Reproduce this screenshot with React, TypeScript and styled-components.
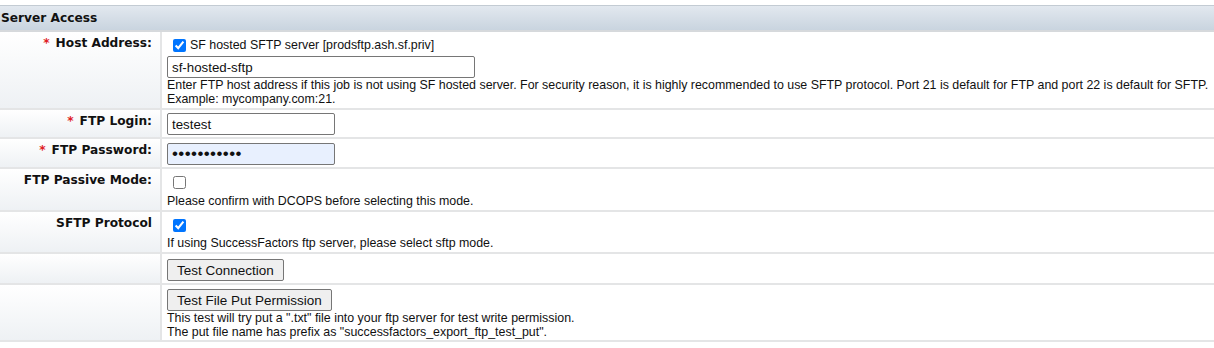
import React from "react";
import styled, { createGlobalStyle } from "styled-components";

const Global = createGlobalStyle`
  html, body { margin: 0; padding: 0; background: #fff; }
  body { font-family: "Liberation Sans", Arial, sans-serif; color: #111; }
`;

const Page = styled.div`
  padding-top: 5px;
  width: 1214px;
`;

const SectionHeader = styled.div`
  height: 24px;
  border-top: 1px solid #c3cbd3;
  border-bottom: 2px solid #d6d9dc;
  background: linear-gradient(#e2e8ef, #c9d4df);
  display: flex;
  align-items: center;
  padding-left: 1px;
  font-family: "DejaVu Sans", Verdana, sans-serif;
  font-weight: bold;
  font-size: 12.2px;
  color: #111;
`;

const Row = styled.div`
  display: grid;
  grid-template-columns: 162px 1fr;
  border-bottom: 2px solid #e4e5e6;
`;

const LabelCell = styled.div`
  background: linear-gradient(#ffffff, #eef1f4);
  border-right: 2px solid #e4e5e6;
  text-align: right;
  padding: 4px 8px 0 0;
  font-family: "DejaVu Sans", Verdana, sans-serif;
  font-weight: bold;
  font-size: 12.2px;
  color: #111;
  line-height: 15px;
`;

const Req = styled.span`
  color: #e0201f;
  margin-right: 6px;
`;

const ValueCell = styled.div<{ $pt: number; $pb: number }>`
  padding: ${(p) => p.$pt}px 5px ${(p) => p.$pb}px 5px;
  font-size: 12.4px;
  line-height: 14px;
  display: flex;
  flex-direction: column;
  align-items: flex-start;
`;

const CheckLine = styled.label`
  display: flex;
  align-items: center;
  font-size: 12.4px;
  height: 18px;
`;

const Check = styled.input`
  width: 13px;
  height: 13px;
  margin: 3px 4px 3px 6px;
  flex: none;
`;

const TextBox = styled.input<{ $w: number; $mt?: number; $pw?: boolean }>`
  box-sizing: border-box;
  width: ${(p) => p.$w}px;
  height: 22px;
  margin: ${(p) => p.$mt ?? 0}px 0 0 0;
  padding: 1px 4px;
  border: 1px solid #767676;
  border-radius: 2px;
  font-family: "Liberation Sans", Arial, sans-serif;
  font-size: ${(p) => (p.$pw ? "17px" : "13.3px")};
  letter-spacing: ${(p) => (p.$pw ? "0.4px" : "normal")};
  color: #111;
  background: ${(p) => (p.$pw ? "#e8f0fe" : "#fff")};
  outline: none;
`;

const Help = styled.div<{ $mt?: number }>`
  margin-top: ${(p) => p.$mt ?? 0}px;
  font-size: 12.4px;
  line-height: 14px;
  color: #111;
`;

const Button = styled.button`
  height: 22px;
  padding: 1px 9px;
  margin: 0;
  border: 1px solid #767676;
  border-radius: 2px;
  background: #efefef;
  font-family: "Liberation Sans", Arial, sans-serif;
  font-size: 13.5px;
  color: #111;
`;

export default function App() {
  return (
    <Page>
      <Global />
      <SectionHeader>Server Access</SectionHeader>

      <Row>
        <LabelCell>
          <Req>*</Req>Host Address:
        </LabelCell>
        <ValueCell $pt={4} $pb={2}>
          <CheckLine>
            <Check type="checkbox" defaultChecked />
            SF hosted SFTP server [prodsftp.ash.sf.priv]
          </CheckLine>
          <TextBox $w={308} $mt={2} defaultValue="sf-hosted-sftp" />
          <Help>
            Enter FTP host address if this job is not using SF hosted server. For security reason, it is highly
            recommended to use SFTP protocol. Port 21 is default for FTP and port 22 is default for SFTP.
            <br />
            Example: mycompany.com:21.
          </Help>
        </ValueCell>
      </Row>

      <Row>
        <LabelCell>
          <Req>*</Req>FTP Login:
        </LabelCell>
        <ValueCell $pt={3} $pb={2}>
          <TextBox $w={168} defaultValue="testest" />
        </ValueCell>
      </Row>

      <Row>
        <LabelCell>
          <Req>*</Req>FTP Password:
        </LabelCell>
        <ValueCell $pt={4} $pb={2}>
          <TextBox $w={168} type="password" $pw defaultValue="testtest123" />
        </ValueCell>
      </Row>

      <Row>
        <LabelCell>FTP Passive Mode:</LabelCell>
        <ValueCell $pt={4} $pb={2}>
          <Check type="checkbox" />
          <Help $mt={2}>Please confirm with DCOPS before selecting this mode.</Help>
        </ValueCell>
      </Row>

      <Row>
        <LabelCell>SFTP Protocol</LabelCell>
        <ValueCell $pt={4} $pb={2}>
          <Check type="checkbox" defaultChecked />
          <Help $mt={1}>If using SuccessFactors ftp server, please select sftp mode.</Help>
        </ValueCell>
      </Row>

      <Row>
        <LabelCell />
        <ValueCell $pt={5} $pb={2}>
          <Button>Test Connection</Button>
        </ValueCell>
      </Row>

      <Row>
        <LabelCell />
        <ValueCell $pt={4} $pb={1}>
          <Button>Test File Put Permission</Button>
          <Help>
            This test will try put a ".txt" file into your ftp server for test write permission.
            <br />
            The put file name has prefix as "successfactors_export_ftp_test_put".
          </Help>
        </ValueCell>
      </Row>
    </Page>
  );
}
